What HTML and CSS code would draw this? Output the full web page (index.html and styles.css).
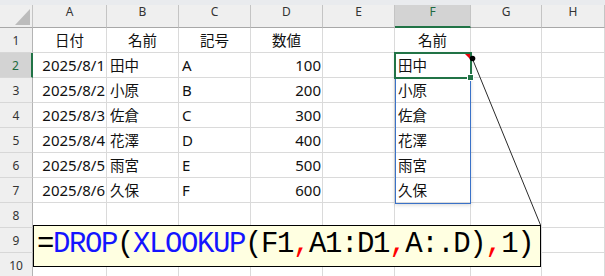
FILE: index.html
```html
<!DOCTYPE html>
<html lang="ja">
<head>
<meta charset="utf-8">
<title>DROP XLOOKUP</title>
<link rel="stylesheet" href="styles.css">
</head>
<body>
<div class="app">
  <div class="topbar"></div>
  <div class="sheet">
    <div class="ch corner"><svg class="tri" width="32" height="22" viewBox="0 0 32 22"><polygon points="15,20 30,4 30,20" fill="#bcbcbc"/></svg></div>
    <div class="ch">A</div><div class="ch">B</div><div class="ch">C</div><div class="ch">D</div><div class="ch">E</div><div class="ch sel">F</div><div class="ch">G</div><div class="ch">H</div>

    <div class="rh">1</div>
    <div class="c m jp">日付</div><div class="c m jp">名前</div><div class="c m jp">記号</div><div class="c m jp">数値</div><div class="c"></div><div class="c m jp">名前</div><div class="c"></div><div class="c"></div>

    <div class="rh sel">2</div>
    <div class="c r">2025/8/1</div><div class="c jp">田中</div><div class="c">A</div><div class="c r">100</div><div class="c"></div><div class="c jp">田中</div><div class="c"></div><div class="c"></div>

    <div class="rh">3</div>
    <div class="c r">2025/8/2</div><div class="c jp">小原</div><div class="c">B</div><div class="c r">200</div><div class="c"></div><div class="c jp">小原</div><div class="c"></div><div class="c"></div>

    <div class="rh">4</div>
    <div class="c r">2025/8/3</div><div class="c jp">佐倉</div><div class="c">C</div><div class="c r">300</div><div class="c"></div><div class="c jp">佐倉</div><div class="c"></div><div class="c"></div>

    <div class="rh">5</div>
    <div class="c r">2025/8/4</div><div class="c jp">花澤</div><div class="c">D</div><div class="c r">400</div><div class="c"></div><div class="c jp">花澤</div><div class="c"></div><div class="c"></div>

    <div class="rh">6</div>
    <div class="c r">2025/8/5</div><div class="c jp">雨宮</div><div class="c">E</div><div class="c r">500</div><div class="c"></div><div class="c jp">雨宮</div><div class="c"></div><div class="c"></div>

    <div class="rh">7</div>
    <div class="c r">2025/8/6</div><div class="c jp">久保</div><div class="c">F</div><div class="c r">600</div><div class="c"></div><div class="c jp">久保</div><div class="c"></div><div class="c"></div>

    <div class="rh">8</div>
    <div class="c"></div><div class="c"></div><div class="c"></div><div class="c"></div><div class="c"></div><div class="c"></div><div class="c"></div><div class="c"></div>

    <div class="rh">9</div>
    <div class="c"></div><div class="c"></div><div class="c"></div><div class="c"></div><div class="c"></div><div class="c"></div><div class="c"></div><div class="c"></div>

    <div class="rh">10</div>
    <div class="c"></div><div class="c"></div><div class="c"></div><div class="c"></div><div class="c"></div><div class="c"></div><div class="c"></div><div class="c"></div>
  </div>

  <div class="spill"></div>
  <div class="selbox"></div>
  <div class="note"></div>
  <div class="handle"></div>

  <svg class="leader" width="605" height="276" viewBox="0 0 605 276">
    <line x1="472.5" y1="59" x2="540.5" y2="225" stroke="#2a2a2a" stroke-width="1"/>
    <circle cx="472.5" cy="58.5" r="2.8" fill="#000"/>
  </svg>

  <div class="formula">=<span class="fn">DROP</span>(<span class="fn">XLOOKUP</span>(F1<span class="sep">,</span>A1:D1<span class="sep">,</span>A:.D)<span class="sep">,</span>1)</div>
</div>
</body>
</html>
```

FILE: styles.css
```css
* {
  box-sizing: border-box;
}

body {
  margin: 0;
  background: #ffffff;
  overflow: hidden;
}

.app {
  position: relative;
  width: 605px;
  height: 276px;
  overflow: hidden;
  font-family: "Noto Sans", "Noto Sans CJK JP", sans-serif;
}

.topbar {
  height: 5px;
  background: #e9ebee;
}

.sheet {
  display: grid;
  grid-template-columns: 33px 74px 72px 72px 72px 72px 76px 71px 63px;
  grid-template-rows: 23px repeat(10, 25px);
}

.ch {
  background: #efefef;
  border-right: 1px solid #c4c4c4;
  border-bottom: 1px solid #a8a8a8;
  font-size: 12px;
  line-height: 14px;
  color: #333333;
  text-align: center;
}

.ch.sel {
  background: #d3d3d3;
  border-bottom: 2px solid #217346;
  color: #1e6b41;
}

.corner {
  display: flex;
}

.tri {
  display: block;
}

.rh {
  background: #efefef;
  border-right: 1px solid #b4b4b4;
  border-bottom: 1px solid #d7d7d7;
  font-size: 12px;
  line-height: 16px;
  color: #333333;
  display: flex;
  align-items: center;
  justify-content: center;
  padding-top: 2px;
}

.rh.sel {
  background: #d3d3d3;
  border-right: 2px solid #217346;
  color: #1e6b41;
}

.c {
  border-right: 1px solid #dadada;
  border-bottom: 1px solid #dadada;
  font-size: 15px;
  line-height: 20px;
  color: #111111;
  display: flex;
  align-items: center;
  padding: 0 3px;
  white-space: nowrap;
  overflow: hidden;
}

.r {
  justify-content: flex-end;
  padding-right: 1px;
}

.m {
  justify-content: center;
}

.jp {
  font-size: 14.5px;
}

.spill {
  position: absolute;
  left: 395px;
  top: 53px;
  width: 76px;
  height: 151px;
  border: 1px solid #3a72c8;
  box-shadow: 0 1px 4px rgba(0, 0, 0, 0.16);
}

.selbox {
  position: absolute;
  left: 394px;
  top: 52px;
  width: 78px;
  height: 27px;
  border: 2px solid #217346;
}

.note {
  position: absolute;
  left: 465px;
  top: 54px;
  width: 5px;
  height: 5px;
  background: #e8000b;
  clip-path: polygon(0 0, 100% 0, 100% 100%);
}

.handle {
  position: absolute;
  left: 467px;
  top: 74px;
  width: 7px;
  height: 7px;
  background: #217346;
  border: 1px solid #ffffff;
}

.leader {
  position: absolute;
  left: 0;
  top: 0;
  pointer-events: none;
}

.formula {
  position: absolute;
  left: 33px;
  top: 225px;
  width: 508px;
  height: 42px;
  border: 1px solid #000000;
  background: #ffffe1;
  font-family: "Liberation Mono", "DejaVu Sans Mono", monospace;
  font-size: 29px;
  letter-spacing: -1.4px;
  line-height: 38px;
  padding-left: 3px;
  white-space: nowrap;
  color: #000000;
}

.fn {
  color: #1414ff;
}

.sep {
  color: #ff0000;
}
```
